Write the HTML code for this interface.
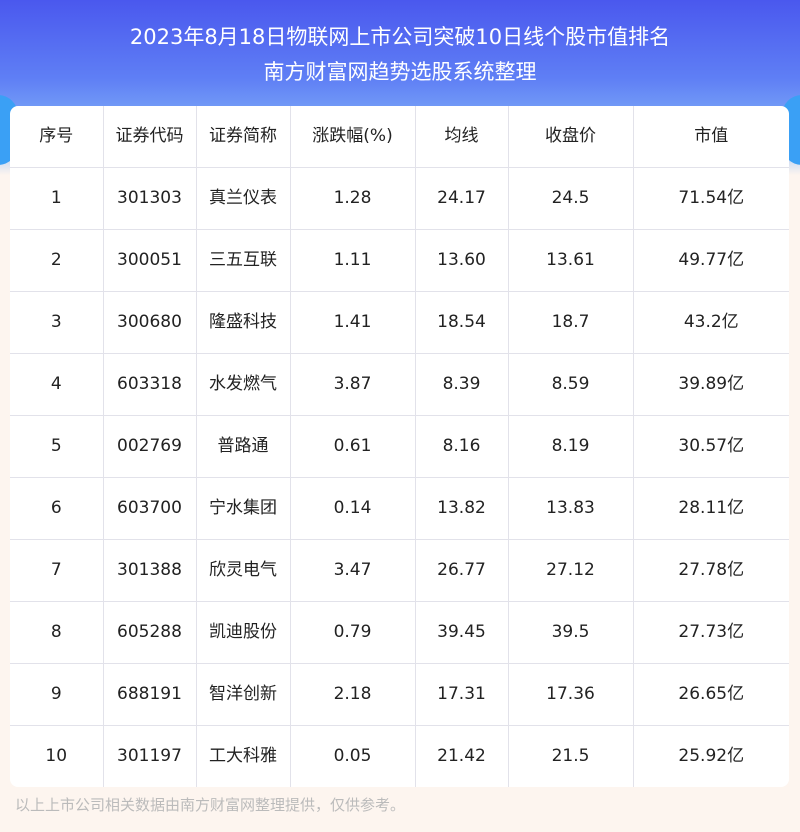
<!DOCTYPE html>
<html><head><meta charset="utf-8"><style>
*{margin:0;padding:0;box-sizing:border-box}
body{width:800px;height:832px;overflow:hidden;background:#fdf5ef;font-family:"DejaVu Sans","Noto Sans CJK SC",sans-serif;position:relative}
.top{position:absolute;left:0;top:0;width:800px;height:175px;background:linear-gradient(180deg,#4a58ee 0%,#5f7ff5 45%,#84b4f7 78%,#fdf5ef 100%)}
.side{position:absolute;top:95px;width:40px;height:70px;background:#3aa0f5;border-radius:20px}
h1{position:absolute;top:22px;left:0;width:800px;text-align:center;color:#fff;font-weight:normal;font-size:21px;line-height:30px}
h2{position:absolute;top:57px;left:0;width:800px;text-align:center;color:#fff;font-weight:normal;font-size:21px;line-height:30px}
table{position:absolute;left:10px;top:106px;width:779px;border-collapse:collapse;background:#fff;border-radius:8px;overflow:hidden;font-size:17px;color:#222}
td{border:1px solid #e2e2ea;text-align:center;height:62px;padding:0;line-height:20px;vertical-align:middle}
tr:first-child td{border-top:none;height:61px}
td:first-child{border-left:none}td:last-child{border-right:none}
tr:last-child td{border-bottom:none}
.foot{position:absolute;left:15px;top:794px;font-size:15px;color:#bbb}
</style></head><body>
<div class="top"></div>
<div class="side" style="left:-22px"></div><div class="side" style="right:-22px"></div>
<h1>2023年8月18日物联网上市公司突破10日线个股市值排名</h1>
<h2>南方财富网趋势选股系统整理</h2>
<table>
<colgroup><col style="width:93px"><col style="width:93px"><col style="width:94px"><col style="width:125px"><col style="width:93px"><col style="width:125px"><col></colgroup>
<tr><td>序号</td><td>证券代码</td><td>证券简称</td><td>涨跌幅(%)</td><td>均线</td><td>收盘价</td><td>市值</td></tr>
<tr><td>1</td><td>301303</td><td>真兰仪表</td><td>1.28</td><td>24.17</td><td>24.5</td><td>71.54亿</td></tr>
<tr><td>2</td><td>300051</td><td>三五互联</td><td>1.11</td><td>13.60</td><td>13.61</td><td>49.77亿</td></tr>
<tr><td>3</td><td>300680</td><td>隆盛科技</td><td>1.41</td><td>18.54</td><td>18.7</td><td>43.2亿</td></tr>
<tr><td>4</td><td>603318</td><td>水发燃气</td><td>3.87</td><td>8.39</td><td>8.59</td><td>39.89亿</td></tr>
<tr><td>5</td><td>002769</td><td>普路通</td><td>0.61</td><td>8.16</td><td>8.19</td><td>30.57亿</td></tr>
<tr><td>6</td><td>603700</td><td>宁水集团</td><td>0.14</td><td>13.82</td><td>13.83</td><td>28.11亿</td></tr>
<tr><td>7</td><td>301388</td><td>欣灵电气</td><td>3.47</td><td>26.77</td><td>27.12</td><td>27.78亿</td></tr>
<tr><td>8</td><td>605288</td><td>凯迪股份</td><td>0.79</td><td>39.45</td><td>39.5</td><td>27.73亿</td></tr>
<tr><td>9</td><td>688191</td><td>智洋创新</td><td>2.18</td><td>17.31</td><td>17.36</td><td>26.65亿</td></tr>
<tr><td>10</td><td>301197</td><td>工大科雅</td><td>0.05</td><td>21.42</td><td>21.5</td><td>25.92亿</td></tr>
</table>
<div class="foot">以上上市公司相关数据由南方财富网整理提供，仅供参考。</div>
</body></html>
